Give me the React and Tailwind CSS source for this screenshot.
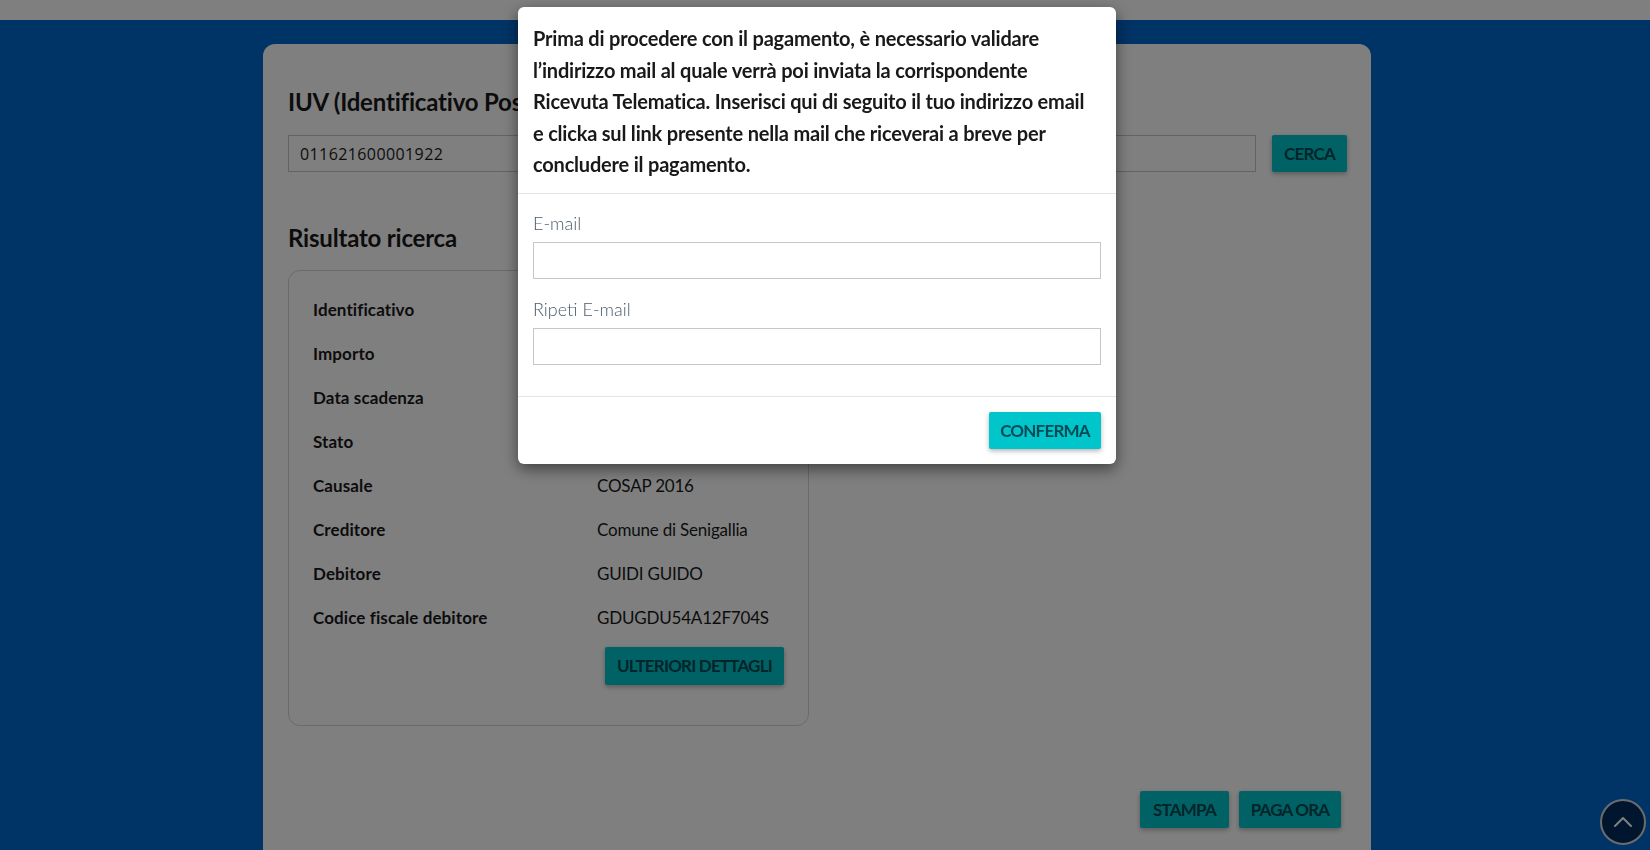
import { ChevronUp } from "lucide-react";

const rows = [
  ["Identificativo", ""],
  ["Importo", ""],
  ["Data scadenza", ""],
  ["Stato", ""],
  ["Causale", "COSAP 2016"],
  ["Creditore", "Comune di Senigallia"],
  ["Debitore", "GUIDI GUIDO"],
  ["Codice fiscale debitore", "GDUGDU54A12F704S"],
];

function TealButton({ children, className }) {
  return (
    <button
      className={
        "h-[37px] rounded-[2px] bg-[#00c5ca] text-[17px] font-bold tracking-[-0.8px] text-[#004a55] shadow-[0_2px_5px_rgba(0,0,0,0.3)] " +
        className
      }
    >
      {children}
    </button>
  );
}

export default function App() {
  return (
    <div className="h-screen overflow-hidden bg-white font-['Lato','Noto_Sans',sans-serif] text-[#19191a]">
      <div className="h-5 bg-white" />

      <main className="h-[830px] bg-[#0066cc] pl-[263px] pt-6">
        <div className="h-[806px] w-[1108px] rounded-t-[12px] bg-white pl-[25px] pr-[23px] pt-[42px]">
          <h2 className="h-[32px] text-[24px] leading-[32px] font-bold tracking-[-0.2px]">
            IUV (Identificativo Posizione Debitoria)
          </h2>

          <div className="mt-[17px] flex gap-[16px]">
            <input
              readOnly
              value="011621600001922"
              className="h-[37px] w-[968px] border border-[#c5c7c9] px-[11px] font-['Open_Sans'] text-[16px] tracking-[0.4px] text-[#19191a]"
            />
            <TealButton className="w-[75px]">CERCA</TealButton>
          </div>

          <h2 className="mt-[50px] h-[32px] text-[24px] leading-[32px] font-bold tracking-[-0.2px]">
            Risultato ricerca
          </h2>

          <div className="mt-4 h-[456px] w-[521px] rounded-[12px] border border-[#d3d5d7] px-6 pt-[17px]">
            {rows.map(([label, value]) => (
              <div key={label} className="flex h-[44px] items-center text-[17px]">
                <div className="w-[284px] font-bold tracking-[0.1px]">{label}</div>
                <div className="tracking-[-0.2px]">{value}</div>
              </div>
            ))}
            <div className="mt-[7px] flex justify-end">
              <TealButton className="h-[38px] w-[179px]">ULTERIORI DETTAGLI</TealButton>
            </div>
          </div>

          <div className="mt-[65px] flex justify-end gap-[10px] pr-[7px]">
            <TealButton className="w-[89px]">STAMPA</TealButton>
            <TealButton className="w-[102px]">PAGA ORA</TealButton>
          </div>
        </div>
      </main>

      {/* torna su */}
      <button className="fixed right-[4px] bottom-[5px] flex h-[46px] w-[46px] items-center justify-center rounded-full border-2 border-[#d8d8d8] bg-[#002b5c] text-white">
        <ChevronUp size={32} strokeWidth={1.5} />
      </button>

      {/* Modal email */}
      <div className="fixed inset-0 flex bg-black/50 pl-[518px] pt-[7px]">
        <div className="h-[457px] w-[598px] rounded-[6px] bg-white shadow-[0_5px_15px_rgba(0,0,0,0.5)]">
          <div className="h-[187px] border-b border-[#e5e5e5] px-[15px] pt-[16px] text-[20px] leading-[31.5px] font-bold tracking-[-0.2px]">
            Prima di procedere con il pagamento, è necessario validare
            <br />
            l’indirizzo mail al quale verrà poi inviata la corrispondente
            <br />
            Ricevuta Telematica. Inserisci qui di seguito il tuo indirizzo email
            <br />
            e clicka sul link presente nella mail che riceverai a breve per
            <br />
            concludere il pagamento.
          </div>

          <div className="h-[203px] border-b border-[#e5e5e5] px-[15px] pt-[16px]">
            <label className="block h-[32px] text-[18px] leading-[26px] font-light text-[#4a5a6a]">E-mail</label>
            <input className="block h-[37px] w-full border border-[#c5c7c9]" />
            <label className="mt-[16px] block h-[33px] text-[18px] leading-[28px] font-light text-[#4a5a6a]">Ripeti E-mail</label>
            <input className="block h-[37px] w-full border border-[#c5c7c9]" />
          </div>

          <div className="flex justify-end px-[15px] pt-[15px]">
            <TealButton className="w-[112px]">CONFERMA</TealButton>
          </div>
        </div>
      </div>
    </div>
  );
}
